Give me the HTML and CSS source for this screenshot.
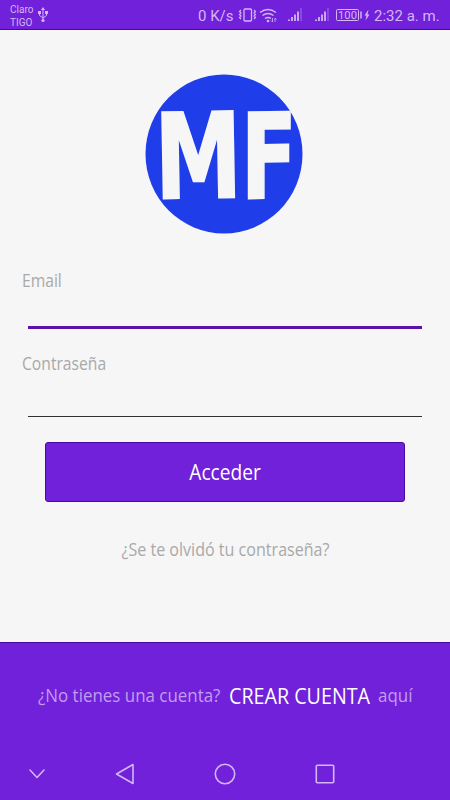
FILE: index.html
```html
<!DOCTYPE html>
<html lang="es">
<head>
  <meta charset="UTF-8">
  <meta name="viewport" content="width=device-width, initial-scale=1.0">
  <title>Acceder</title>
  <link rel="stylesheet" href="styles.css">
</head>
<body>

  <div class="status-bar">
    <div class="carriers">
      <span>Claro</span>
      <span>TIGO</span>
    </div>
    <svg class="usb" width="10" height="16" viewBox="0 0 10 16">
      <path d="M5 2v11M1.500 5v3.500L5 11l3.500-2.500V5" fill="none" stroke="currentColor"/>
      <path d="M5 0L7 3H3z" fill="currentColor"/>
      <path d="M0 4h3v3H0zM7 4h3v3H7z" fill="currentColor"/>
      <circle cx="5" cy="13.500" r="1.600" fill="currentColor"/>
    </svg>
    <span class="speed">0 K/s</span>
    <svg class="icons" width="136" height="20" viewBox="0 0 136 20" fill="none" stroke="currentColor">
      <!-- Vibrate -->
      <rect x="6" y="4" width="7.500" height="12" rx="1" stroke-width="1.300"/>
      <path d="M3 5L1.500 6.500 3 8 1.500 9.500 3 11 1.500 12.500 3 14M16 5l1.500 1.500L16 8l1.500 1.500L16 11l1.500 1.500L16 14" stroke-width="1.200"/>
      <!-- Wifi -->
      <path d="M22 7.500q8-6 16 0M24.500 10.500q5.500-4 11 0M27 13.500q3-2 6 0" stroke-width="1.500"/>
      <circle cx="30" cy="16" r="1.300" fill="currentColor" stroke="none"/>
      <path d="M34.500 13v4M33 15.500l1.500 1.500M37 17v-4M37 13l1.500 1.500" stroke-width=".8"/>
      <!-- Signal -->
      <path d="M51 14.500V16M54 12v4M57 9.500V16M60 6.500V16M78 14.500V16M81 12v4M84 9.500V16M87 6.500V16" stroke-width="1.800"/>
      <path d="M63 3v13M90 3v13" stroke-width="1.800" opacity=".3"/>
      <!-- Battery -->
      <rect x="98.500" y="4.500" width="22" height="11" rx="1"/>
      <path d="M123 6.500v7" stroke-width="1.500"/>
      <text class="battery" x="109.500" y="13.800" text-anchor="middle" textLength="19" lengthAdjust="spacingAndGlyphs">100</text>
      <path d="M130.500 4.500l-4 6h2l-1 5 4-6h-2z" fill="currentColor" stroke="none"/>
    </svg>
    <span class="clock">2:32 a. m.</span>
  </div>

  <div class="login">
    <svg class="logo" width="158" height="160" viewBox="0 0 158 160">
      <ellipse cx="79" cy="80" rx="78.500" ry="79.500"/>
      <text transform="translate(10.500 124.500) rotate(-1)" font-size="118" textLength="87" lengthAdjust="spacingAndGlyphs">M</text>
      <text transform="translate(96 124.500) rotate(-1) skewX(-1)" font-size="118" textLength="56" lengthAdjust="spacingAndGlyphs">F</text>
    </svg>

    <form class="form">
      <label for="email"><span class="narrow">Email</span></label>
      <input type="text" id="email" class="active">
      <label for="password"><span class="narrow">Contraseña</span></label>
      <input type="password" id="password">
      <button type="button"><span class="narrow">Acceder</span></button>
    </form>

    <a class="forgot"><span class="narrow">¿Se te olvidó tu contraseña?</span></a>
  </div>

  <div class="footer">
    <p class="signup">
      <span class="question"><span class="narrow">¿No tienes una cuenta?</span></span>
      <a class="create"><span class="narrow">CREAR CUENTA</span></a>
      <span class="here"><span class="narrow">aquí</span></span>
    </p>

    <div class="nav-bar">
      <svg width="16" height="20" viewBox="0 0 16 20"><path d="M1 6l7 7.500L15 6"/></svg>
      <svg width="20" height="22" viewBox="0 0 20 22"><path d="M18 1.500v19L1.500 11z"/></svg>
      <svg width="22" height="22" viewBox="0 0 22 22"><circle cx="11" cy="11" r="9.700"/></svg>
      <svg width="20" height="22" viewBox="0 0 20 22"><rect x="1.300" y="2.300" width="17.400" height="17.400" rx="1"/></svg>
    </div>
  </div>

</body>
</html>
```
FILE: styles.css
```css
* {
  box-sizing: border-box;
}

body {
  margin: 0;
  width: 450px;
  height: 800px;
  display: flex;
  flex-direction: column;
  background: #f6f6f6;
  font-family: 'Open Sans', 'Noto Sans', sans-serif;
  overflow: hidden;
}

/* Status bar */
.status-bar {
  height: 30px;
  display: flex;
  align-items: center;
  padding-left: 10px;
  background: #7021d9;
  border-bottom: 1px solid #4b0a9e;
  color: #d4b5f5;
  font-family: Roboto, sans-serif;
  white-space: nowrap;
}

.carriers {
  width: 28px;
  display: flex;
  flex-direction: column;
  font-size: 10px;
  line-height: 13px;
  padding-top: 2px;
}

.speed {
  width: 40px;
  margin-left: 150px;
  font-size: 15px;
  padding-top: 2px;
}

.icons {
  margin-top: 1px;
}

.battery {
  font-size: 10.5px;
  fill: currentColor;
  stroke: none;
}

.clock {
  font-size: 15px;
  padding-top: 2px;
}

/* Login */
.login {
  flex: 1;
  display: flex;
  flex-direction: column;
  align-items: center;
  padding-top: 44px;
}

.logo {
  margin-right: 2px;
  fill: #1f3eea;
  overflow: visible;
}

.logo text {
  fill: #f6f6f6;
  stroke: #f6f6f6;
  stroke-width: 2px;
  font-family: 'DejaVu Sans', sans-serif;
  font-weight: bold;
}

.narrow {
  display: inline-block;
  transform: scaleX(0.87);
  transform-origin: left;
  white-space: nowrap;
}

.form {
  width: 100%;
  display: flex;
  flex-direction: column;
  padding: 32px 28px 0;
}

.form label {
  height: 28px;
  margin-left: -6px;
  font-size: 18px;
  line-height: 28px;
  color: #a9a9a9;
}

.form input {
  height: 35px;
  margin-bottom: 20px;
  padding: 0;
  border: none;
  border-bottom: 1px solid #303030;
  background: none;
  outline: none;
}

.form input.active {
  border-bottom: 3px solid #5b12a8;
}

.form #password {
  height: 40px;
  margin-bottom: 25px;
}

.form button {
  height: 60px;
  margin: 0 17px;
  padding: 0 0 3px;
  border: 1px solid #4b0a9e;
  border-radius: 3px;
  background: #7021d9;
  color: #fff;
  font-family: inherit;
  font-size: 22px;
}

.form button .narrow,
.forgot .narrow {
  transform-origin: center;
}

.forgot {
  margin-top: 33px;
  font-size: 18px;
  line-height: 28px;
  color: #a9a9a9;
}

.forgot .narrow {
  transform: scaleX(0.893);
}

/* Footer */
.footer {
  height: 158px;
  display: flex;
  flex-direction: column;
  background: #7021d9;
  border-top: 1px solid #4b0a9e;
  color: #c39cf0;
}

.signup {
  height: 104px;
  display: flex;
  align-items: center;
  margin: 0;
  padding-left: 38px;
  font-size: 18px;
}

.question {
  width: 191px;
}

.question .narrow,
.here .narrow {
  transform: scaleX(0.94);
}

.create {
  width: 149px;
  color: #fff;
  font-size: 22px;
}

.create .narrow {
  transform: scaleX(0.895);
}

.nav-bar {
  display: flex;
  align-items: center;
  height: 54px;
  padding: 2px 0 0 29px;
}

.nav-bar svg {
  fill: none;
  stroke: #d4b5f5;
  stroke-width: 1.6;
  stroke-linejoin: round;
  stroke-linecap: round;
  margin-right: 79px;
}

.nav-bar svg:first-child {
  margin-right: 70px;
}
```
